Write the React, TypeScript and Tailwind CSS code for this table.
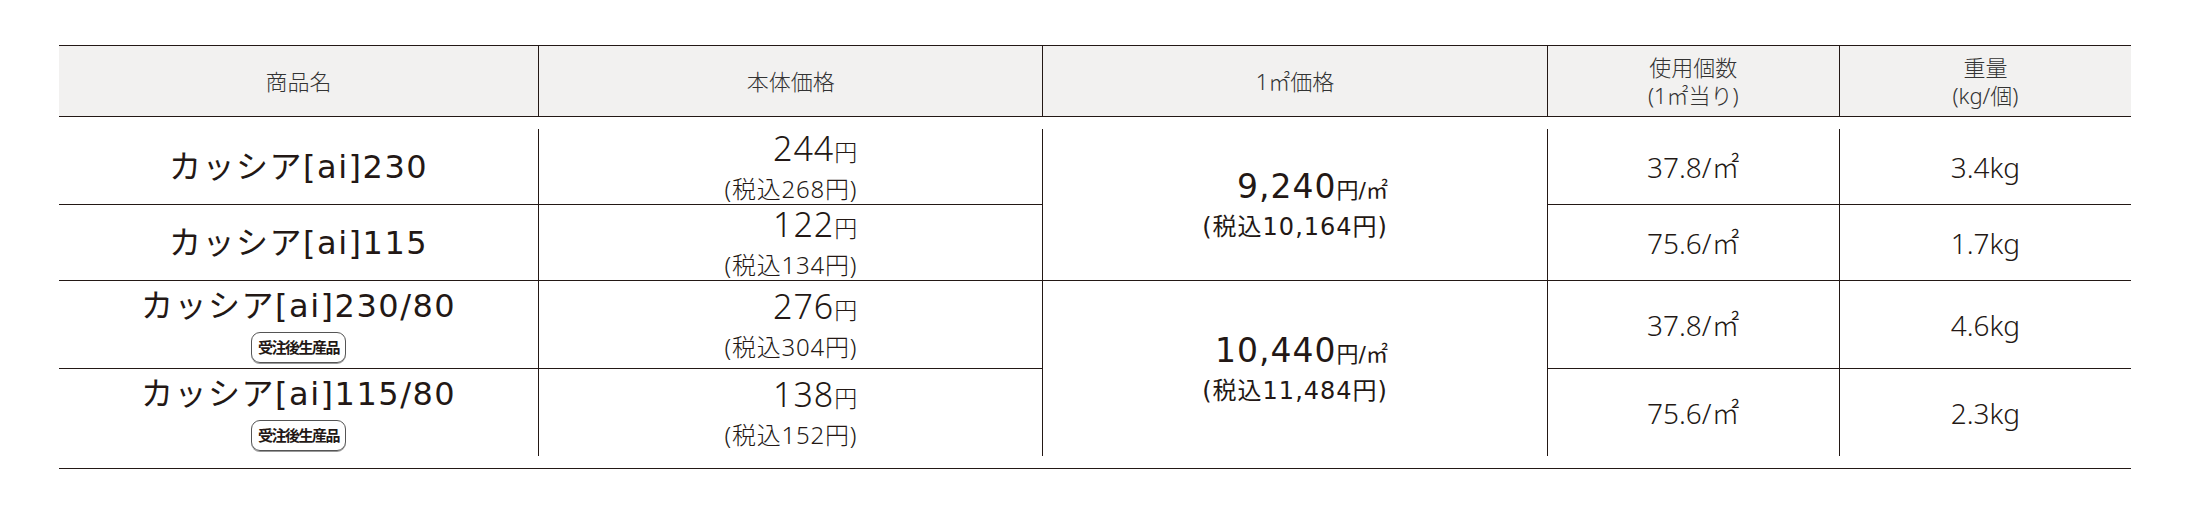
const rows = [
  { name: "カッシア[ai]230", badge: false, price: "244", tax: "268", use: "37.8", weight: "3.4" },
  { name: "カッシア[ai]115", badge: false, price: "122", tax: "134", use: "75.6", weight: "1.7" },
  { name: "カッシア[ai]230/80", badge: true, price: "276", tax: "304", use: "37.8", weight: "4.6" },
  { name: "カッシア[ai]115/80", badge: true, price: "138", tax: "152", use: "75.6", weight: "2.3" },
];

const areaPrices = [
  { price: "9,240", tax: "10,164" },
  { price: "10,440", tax: "11,484" },
];

const thin = "font-['Noto_Sans','Noto_Sans_CJK_JP',sans-serif] font-light text-[#231815]";
const bold = "font-['DejaVu_Sans','Noto_Sans_CJK_JP',sans-serif] text-[#231815]";

function Badge() {
  return (
    <span className="mt-[7px] flex h-[31px] items-center rounded-[9px] border border-[#555] px-[6px] text-[15px] font-bold tracking-[-1.5px] text-[#231815] shadow-[0_1px_0_#999] font-['Noto_Sans_CJK_JP',sans-serif]">
      受注後生産品
    </span>
  );
}

function AreaPrice({ price, tax }: { price: string; tax: string }) {
  return (
    <div className={`inline-flex flex-col items-end ${bold}`}>
      <div className="leading-[38px]">
        <span className="text-[33px] tracking-[1px]">{price}</span>
        <span className="text-[22px]">円/㎡</span>
      </div>
      <div className="text-[24px] leading-[30px] tracking-[1px]">(税込{tax}円)</div>
    </div>
  );
}

export default function App() {
  return (
    <div className="min-h-[518px] w-full bg-white px-[59px] pt-[45px]">
      <div className="border-y border-[#231815]">
        {/* header */}
        <div className="grid h-[71px] grid-cols-[479fr_504fr_504fr_292fr_292fr] border-b border-[#231815] bg-[#f2f1f0] text-center text-[22px] leading-[28px] font-light text-[#333] font-['Noto_Sans','Noto_Sans_CJK_JP',sans-serif]">
          <div className="flex items-center justify-center">商品名</div>
          <div className="flex items-center justify-center border-l border-[#231815]">本体価格</div>
          <div className="flex items-center justify-center border-l border-[#231815]">1㎡価格</div>
          <div className="flex flex-col items-center justify-center border-l border-[#231815]">
            <span>使用個数</span>
            <span>(1㎡当り)</span>
          </div>
          <div className="flex flex-col items-center justify-center border-l border-[#231815]">
            <span>重量</span>
            <span>(kg/個)</span>
          </div>
        </div>

        {/* body */}
        <div className="py-[12px]">
          <div className="grid grid-cols-[479fr_504fr_504fr_292fr_292fr] grid-rows-[75px_76px_88px_88px]">
            {rows.map((r, i) => {
              const top = i > 0 ? "border-t border-[#231815]" : "";
              return [
                <div key={`n${i}`} className={`flex flex-col items-center justify-center ${top}`}>
                  <span className={`text-[32px] leading-[38px] tracking-[1.5px] ${bold}`}>{r.name}</span>
                  {r.badge && <Badge />}
                </div>,
                <div key={`p${i}`} className={`flex items-center justify-center border-l border-[#231815] ${top}`}>
                  <div className={`inline-flex flex-col items-end ${thin}`}>
                    <div className="leading-[38px]">
                      <span className="text-[34px] tracking-[1px]">{r.price}</span>
                      <span className="text-[23px]">円</span>
                    </div>
                    <div className="text-[24px] leading-[30px] tracking-[0.8px]">(税込{r.tax}円)</div>
                  </div>
                </div>,
                i % 2 === 0 ? (
                  <div
                    key={`a${i}`}
                    className={`row-span-2 flex items-center justify-center border-l border-[#231815] ${top}`}
                  >
                    <AreaPrice {...areaPrices[i / 2]} />
                  </div>
                ) : null,
                <div
                  key={`u${i}`}
                  className={`flex items-center justify-center border-l border-[#231815] text-[28px] ${thin} ${top}`}
                >
                  {r.use}/㎡
                </div>,
                <div
                  key={`w${i}`}
                  className={`flex items-center justify-center border-l border-[#231815] text-[28px] ${thin} ${top}`}
                >
                  {r.weight}kg
                </div>,
              ];
            })}
          </div>
        </div>
      </div>
    </div>
  );
}
